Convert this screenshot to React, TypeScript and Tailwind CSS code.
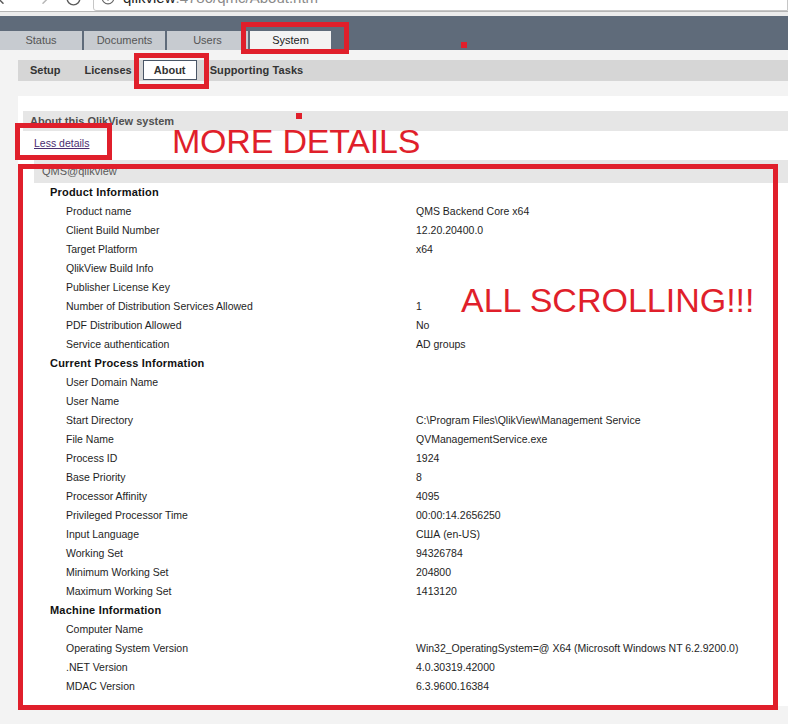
import React from "react";
import { ArrowLeft, ArrowRight, RotateCw, Info } from "lucide-react";

type Row = [string, string];

const sections: { title: string; rows: Row[] }[] = [
  {
    title: "Product Information",
    rows: [
      ["Product name", "QMS Backend Core x64"],
      ["Client Build Number", "12.20.20400.0"],
      ["Target Platform", "x64"],
      ["QlikView Build Info", ""],
      ["Publisher License Key", ""],
      ["Number of Distribution Services Allowed", "1"],
      ["PDF Distribution Allowed", "No"],
      ["Service authentication", "AD groups"],
    ],
  },
  {
    title: "Current Process Information",
    rows: [
      ["User Domain Name", ""],
      ["User Name", ""],
      ["Start Directory", "C:\\Program Files\\QlikView\\Management Service"],
      ["File Name", "QVManagementService.exe"],
      ["Process ID", "1924"],
      ["Base Priority", "8"],
      ["Processor Affinity", "4095"],
      ["Privileged Processor Time", "00:00:14.2656250"],
      ["Input Language", "США (en-US)"],
      ["Working Set", "94326784"],
      ["Minimum Working Set", "204800"],
      ["Maximum Working Set", "1413120"],
    ],
  },
  {
    title: "Machine Information",
    rows: [
      ["Computer Name", ""],
      ["Operating System Version", "Win32_OperatingSystem=@ X64 (Microsoft Windows NT 6.2.9200.0)"],
      [".NET Version", "4.0.30319.42000"],
      ["MDAC Version", "6.3.9600.16384"],
    ],
  },
];

const tabs = ["Status", "Documents", "Users", "System"];

const App = () => {
  return (
    <div className="relative w-[788px] h-[724px] overflow-hidden bg-[#f3f3f3] font-['Liberation_Sans',Arial,sans-serif] text-[#1e1e1e]">
      {/* browser chrome, cut off at the top */}
      <div className="h-[11px] bg-white overflow-hidden">
        <div className="flex items-center h-[26px] -mt-[15px]">
          <ArrowLeft className="w-[18px] h-[18px] -ml-[6px] text-[#5a5a5a]" strokeWidth={2} />
          <ArrowRight className="w-[18px] h-[18px] ml-[22px] text-[#b8b8b8]" strokeWidth={2} />
          <RotateCw className="w-[17px] h-[17px] ml-[13px] text-[#5a5a5a]" strokeWidth={2} />
          <div className="ml-[11px] flex-1 h-[26px] flex items-center border border-[#c6c6c6] rounded-bl-[3px] pl-[7px]">
            <Info className="w-[14px] h-[14px] text-[#666]" strokeWidth={2} />
            <span className="ml-[8px] text-[15px] text-[#222]">qlikview</span>
            <span className="text-[15px] text-[#8a8a8a]">:4780/qmc/About.htm</span>
          </div>
        </div>
      </div>
      <div className="h-px bg-[#b5b5b5]" />
      <div className="h-[4px] bg-[#ececec]" />

      {/* top tabs */}
      <div className="h-[34px] bg-[#5f6b7a] flex items-end gap-[2px]">
        {tabs.map((t, i) => (
          <div
            key={t}
            className={
              i === 3
                ? "w-[81px] h-[19px] flex items-center justify-center bg-[#f3f3f3] text-[11px] text-[#222]"
                : i === 0
                ? "w-[82px] h-[19px] flex items-center justify-center bg-[#c7cbd0] text-[11px] text-[#555]"
                : "w-[81px] h-[19px] flex items-center justify-center bg-[#c7cbd0] text-[11px] text-[#555]"
            }
          >
            {t}
          </div>
        ))}
      </div>

      {/* sub navigation */}
      <div className="mt-[10px] ml-[18px] h-[21px] bg-[#d6d6d6] flex items-start text-[11px] font-bold text-[#333]">
        <span className="ml-[12px] leading-[21px]">Setup</span>
        <span className="ml-[24px] leading-[21px]">Licenses</span>
        <span className="ml-[11px] w-[54px] h-[20px] leading-[18px] text-center bg-white border border-[#4a5666]">About</span>
        <span className="ml-[13px] leading-[21px] tracking-[0.1px]">Supporting Tasks</span>
      </div>

      {/* content panel */}
      <div className="mt-[15px] ml-[18px] h-[610px] bg-white pt-[15px]">
        <div className="ml-[5px] h-[20px] bg-[#e6e6e6] pl-[7px] flex items-center text-[11px] font-bold text-[#505050]">
          About this QlikView system
        </div>
        <div className="h-[29px] pl-[16px] pb-[4px] flex items-center">
          <span className="text-[10.5px] underline text-[#4a2d70]">Less details</span>
        </div>
        <div className="ml-[16px] h-[23px] bg-[#e6e6e6] pl-[8px] flex items-center text-[11px] text-[#5a5a5a]">
          QMS@qlikview
        </div>
        {sections.map((s) => (
          <div key={s.title}>
            <div className="h-[19px] pl-[32px] flex items-center text-[11px] font-bold tracking-[0.2px] text-[#111]">
              {s.title}
            </div>
            {s.rows.map(([label, value]) => (
              <div key={label} className="h-[19px] pl-[48px] flex items-center text-[10.5px] text-[#1e1e1e]">
                <span className="w-[350px] shrink-0">{label}</span>
                <span>{value}</span>
              </div>
            ))}
          </div>
        ))}
      </div>

      {/* red annotations drawn over the screenshot */}
      <div className="absolute left-[241px] top-[22px] w-[108px] h-[32px] border-[5px] border-[#e01f2b]" />
      <div className="absolute left-[134px] top-[53px] w-[75px] h-[36px] border-[5px] border-[#e01f2b]" />
      <div className="absolute left-[15px] top-[123px] w-[97px] h-[37px] border-[5px] border-[#e01f2b]" />
      <div className="absolute left-[18px] top-[164px] w-[760px] h-[546px] border-[5px] border-[#e01f2b]" />
      <div className="absolute left-[461px] top-[42px] w-[6px] h-[6px] bg-[#e01f2b]" />
      <div className="absolute left-[296px] top-[113px] w-[6px] h-[6px] bg-[#e01f2b]" />
      <div className="absolute left-[172px] top-[124px] text-[34px] leading-none tracking-[-0.2px] text-[#e01f2b] whitespace-nowrap">
        MORE DETAILS
      </div>
      <div className="absolute left-[461px] top-[283px] text-[34px] leading-none text-[#e01f2b] whitespace-nowrap">
        ALL SCROLLING!!!
      </div>
    </div>
  );
};

export default App;
